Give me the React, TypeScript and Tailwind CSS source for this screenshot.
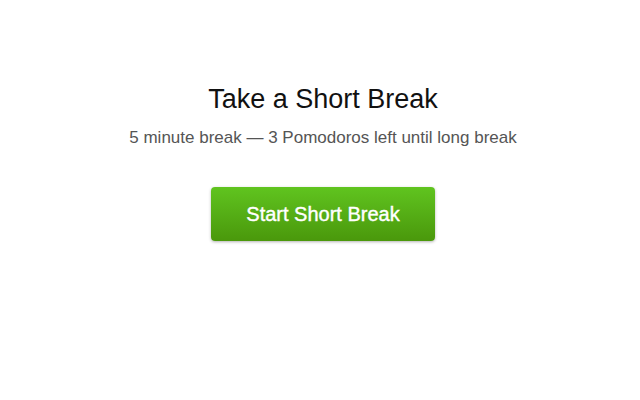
export default function App() {
  return (
    <div className="w-[640px] h-[400px] bg-white flex flex-col items-center pl-[6px]" style={{ fontFamily: '"Liberation Sans", Arial, sans-serif' }}>
      <h1 className="mt-[82px] text-[27px] leading-[34px] text-[#111]">Take a Short Break</h1>
      <p className="mt-[12px] text-[17px] leading-[20px] text-[#555]">5 minute break — 3 Pomodoros left until long break</p>
      <button className="mt-[39px] w-[224px] h-[54px] rounded-[4px] bg-gradient-to-b from-[#60c41f] to-[#4a980b] text-white text-[20px] [-webkit-text-stroke:0.4px_white] shadow-[0_1px_3px_rgba(0,0,0,0.3)]">
        Start Short Break
      </button>
    </div>
  );
}
